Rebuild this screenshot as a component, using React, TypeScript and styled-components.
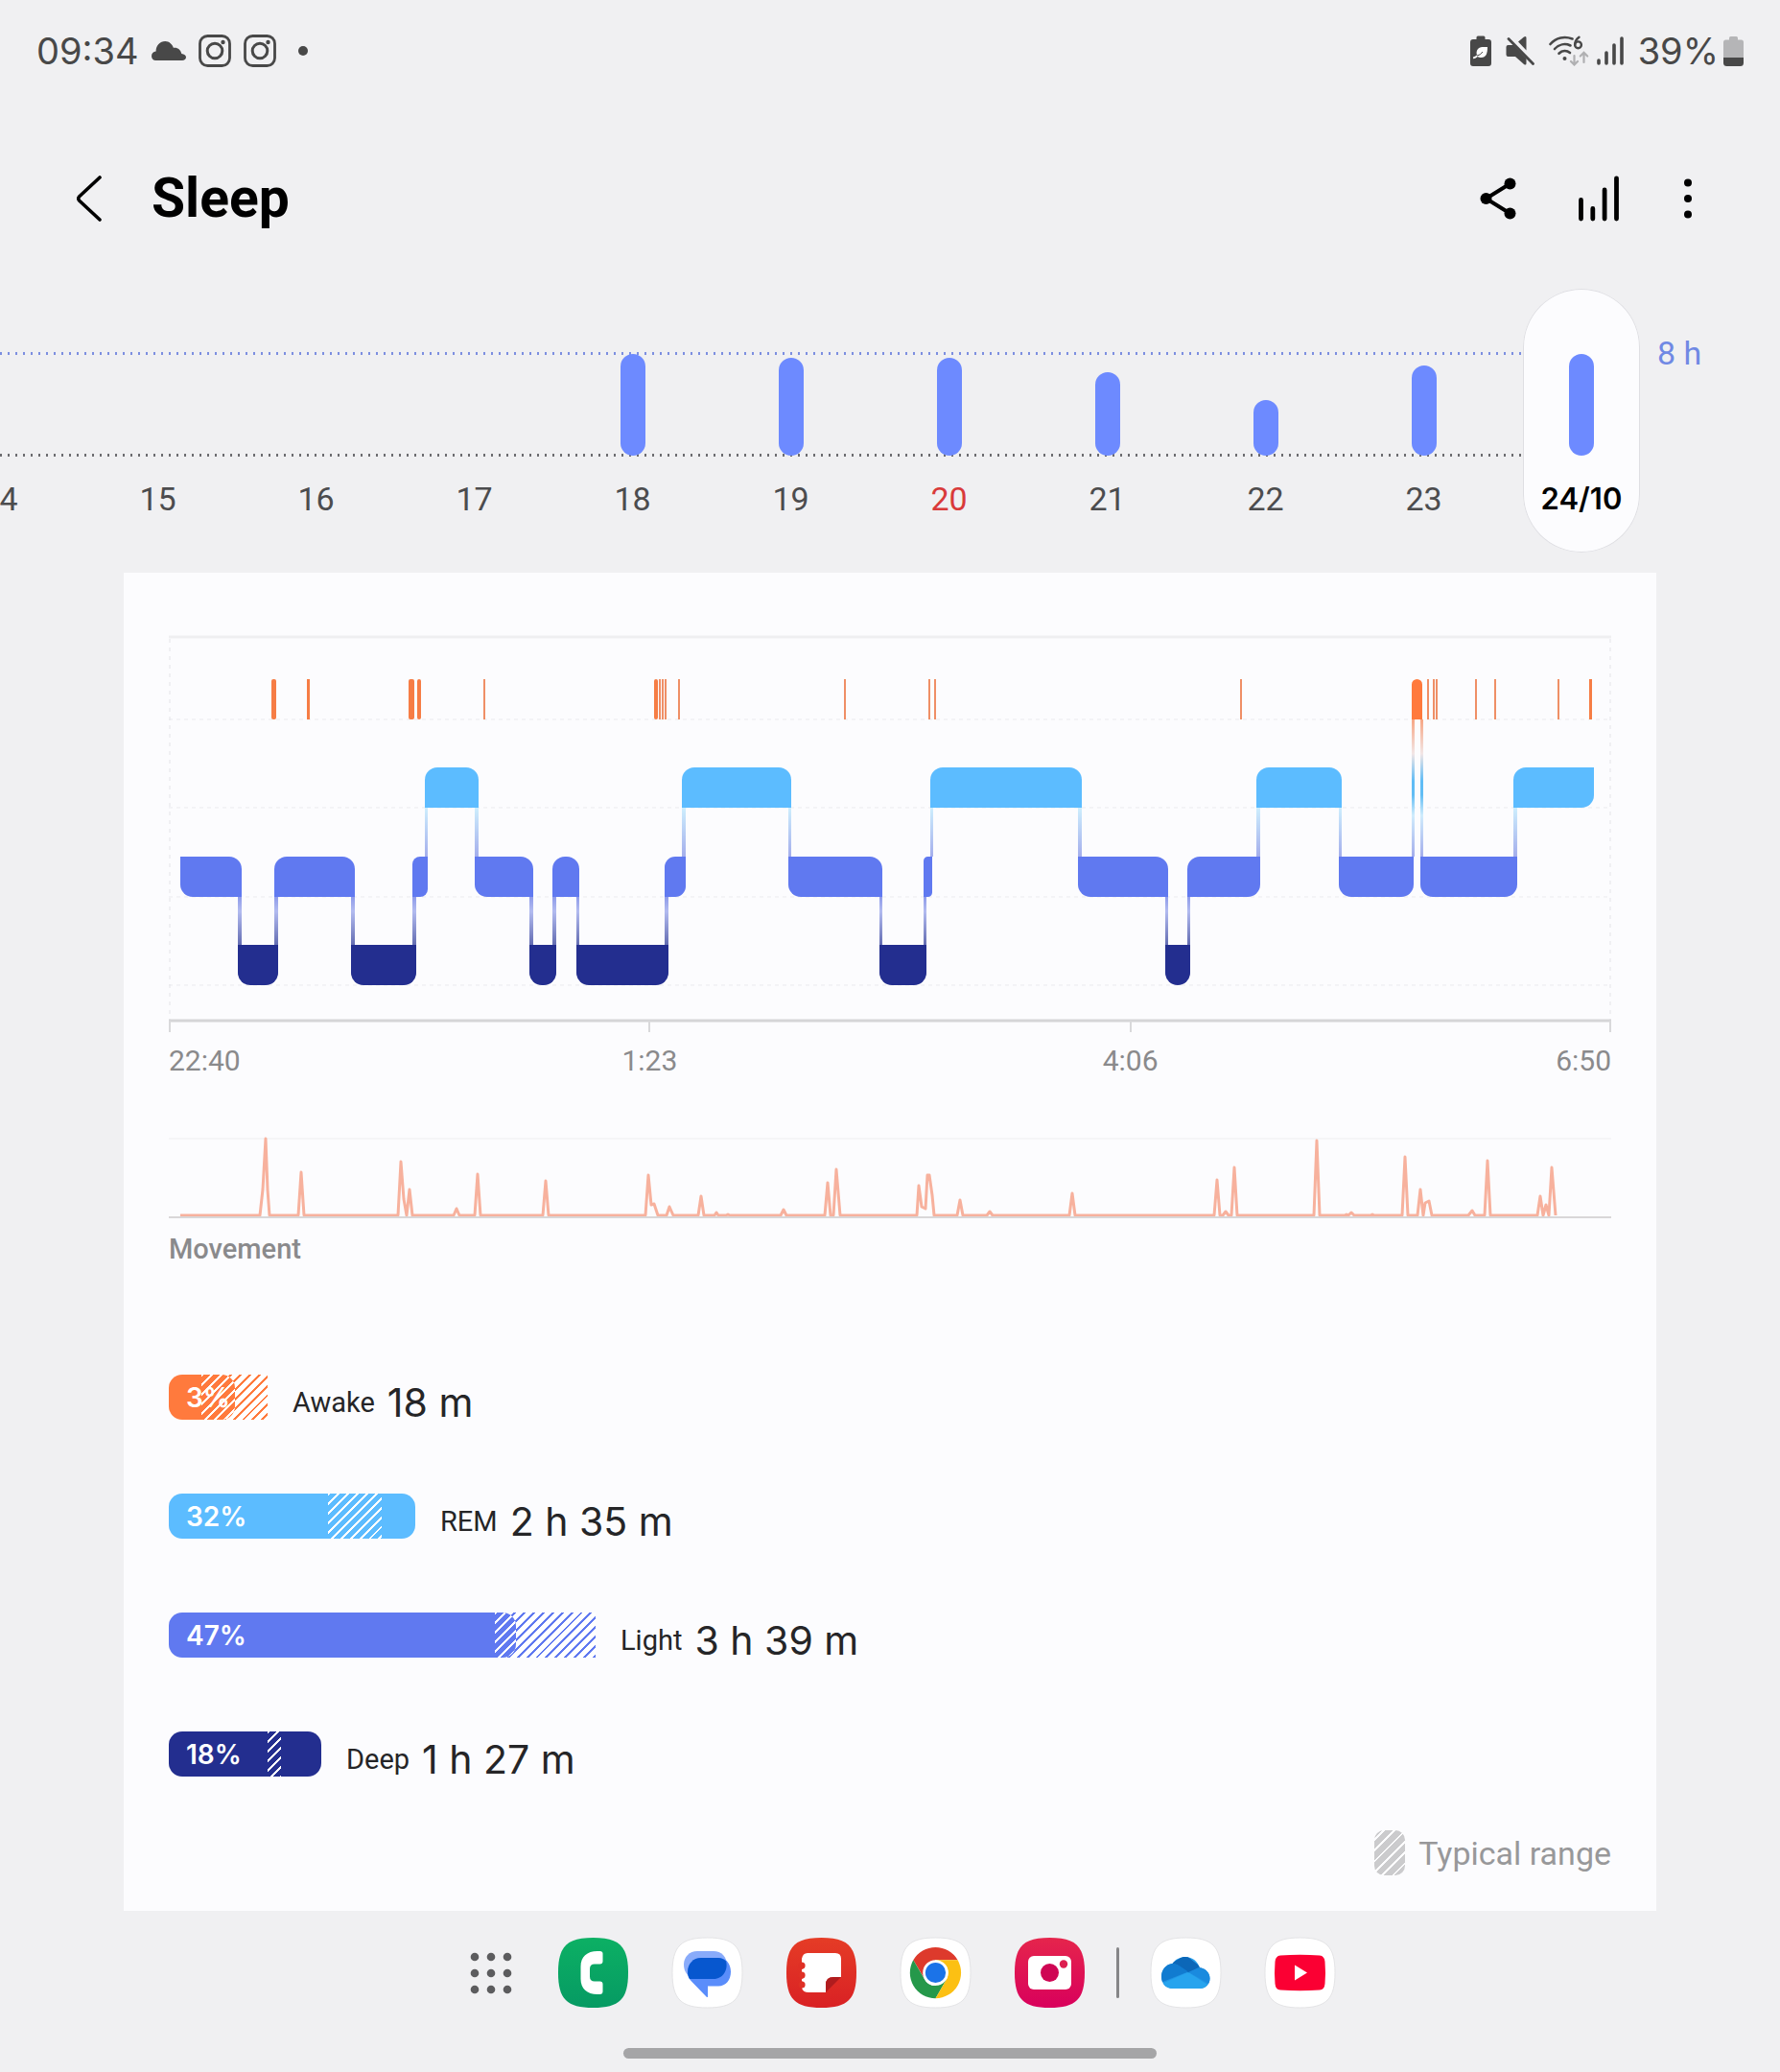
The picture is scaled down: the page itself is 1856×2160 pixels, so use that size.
import React from "react";
import styled, { createGlobalStyle } from "styled-components";

const color = {
  page: "#f0f0f2",
  card: "#fcfcfe",
  ink: "#000000",
  text: "#252527",
  status: "#484848",
  muted: "#8a8a8c",
  day: "#4c4c4e",
  sunday: "#d93a3a",
  bar: "#6d8aff",
  awake: "#ff7a3d",
  rem: "#5cbcff",
  light: "#6079f0",
  deep: "#232e8f",
};

const GlobalStyle = createGlobalStyle`
  body {
    margin: 0;
    background: ${color.page};
    font-family: Roboto, "Liberation Sans", sans-serif;
    color: ${color.text};
  }
  *, *::before, *::after { box-sizing: border-box; }
  button { font: inherit; }
  svg { display: block; }
`;

const Screen = styled.div`
  display: flex;
  flex-direction: column;
  min-height: 100vh;
  overflow: hidden;
`;

/* ---------- status bar ---------- */

const StatusBar = styled.div`
  display: flex;
  align-items: center;
  justify-content: space-between;
  height: 106px;
  padding: 0 38px;
  color: ${color.status};
`;

const StatusGroup = styled.div<{ $gap: number }>`
  display: flex;
  align-items: center;
  gap: ${(p) => p.$gap}px;
`;

const StatusText = styled.span`
  font-family: Inter, Roboto, sans-serif;
  font-size: 38px;
  line-height: 46px;
  font-weight: 400;
`;

const MoreDot = styled.span`
  width: 10px;
  height: 10px;
  margin-left: 10px;
  border-radius: 50%;
  background: currentColor;
`;

const InstagramGlyph = () => (
  <svg width="34" height="34" viewBox="0 0 34 34" fill="none" stroke="currentColor">
    <rect x="1.5" y="1.5" width="31" height="31" rx="8" strokeWidth="2.8" />
    <circle cx="17" cy="17" r="7.8" strokeWidth="3" />
    <circle cx="25.5" cy="8" r="2.2" fill="currentColor" stroke="none" />
  </svg>
);

const CloudGlyph = () => (
  <svg width="36" height="20" viewBox="0 0 36 20" fill="currentColor">
    <path d="M4.5 20C1.800 20 0 18 0 15.500C0 12.500 2 10.600 4.600 10.400C4.600 4.500 8.800 0 14.300 0C18.300 0 21.400 2.800 22.800 6.800C27.500 6.300 30.500 9 31.300 13C34 13.300 36 14.700 36 16.800C36 18.800 34.300 20 32 20Z" />
  </svg>
);

const LeafBatteryGlyph = () => (
  <svg width="22" height="32" viewBox="0 0 22 32">
    <path fill="currentColor" d="M6.500 2Q6.500 0.500 8 0.500H14Q15.500 0.500 15.500 2V4H19Q22 4 22 7V29Q22 32 19 32H3Q0 32 0 29V7Q0 4 3 4H6.500Z" />
    <path fill="#fff" d="M18 12C18 19 16.500 23 11.500 23C9.800 23 8.800 22.600 7.800 22C6.500 23.300 5 24 3.200 24.200L3 22.500C5 22 6.200 21.200 7 20.200C5.500 16 8.500 12.200 12.500 12Z" />
    <path stroke={color.status} strokeWidth="1" fill="none" d="M7 21C10 20.500 12 18.500 12.800 17" />
  </svg>
);

const MuteGlyph = () => (
  <svg width="30" height="32" viewBox="0 0 30 32">
    <path fill="currentColor" d="M13 6.500L19 1.500Q21.500 0 21.500 2.500V15.500ZM2.500 10H8L21.500 24V29Q21.500 31.500 19 30L10 22H2.500Q0.500 22 0.500 20V12Q0.500 10 2.500 10Z" />
    <path stroke="currentColor" strokeWidth="2.800" strokeLinecap="round" d="M3 3.500L28.500 29.500" />
  </svg>
);

const WifiGlyph = () => (
  <svg width="42" height="32" viewBox="0 0 42 32" fill="none" strokeLinecap="round">
    <g stroke="currentColor" strokeWidth="2.600">
      <path d="M1.500 9C7.500 2 16.500 0.500 24.500 3.500" />
      <path d="M6 14C10.500 9 17 8 22.500 10.500" />
      <path d="M10.500 18.800C14 15.500 18.500 15.300 22 18" />
      <path strokeWidth="2.400" d="M31.500 1.800C28.500 4 27.200 6.500 27.200 9.500" />
      <circle cx="30.500" cy="9.800" r="3.400" strokeWidth="2.400" />
    </g>
    <circle cx="16.500" cy="24" r="2" fill="currentColor" />
    <g stroke="#b0b0b2" strokeWidth="2.200">
      <path d="M26.500 21V30M23 27L26.500 30.500L30 27" />
      <path d="M36.500 28V18M32.800 21.500L36.500 17.800L40.200 21.500" />
    </g>
  </svg>
);

const SignalGlyph = () => (
  <svg width="28" height="30" viewBox="0 0 28 30" stroke="currentColor" strokeWidth="3.600" strokeLinecap="round">
    <path d="M2 25V28M10 17V28M18 9V28M26 2V28" />
  </svg>
);

const BatteryGlyph = () => (
  <svg width="21" height="31" viewBox="0 0 21 31">
    <path fill="#b5b5b7" d="M6 1.500Q6 0 7.500 0H13.500Q15 0 15 1.500V3.500H18.500Q21 3.500 21 6V22H0V6Q0 3.500 2.500 3.500H6Z" />
    <path fill="currentColor" d="M0 22H21V27.500Q21 31 17.500 31H3.500Q0 31 0 27.500Z" />
  </svg>
);

/* ---------- title bar ---------- */

const TitleBar = styled.header`
  display: flex;
  align-items: center;
  height: 195px;
  padding: 6px 84px 0 69px;
`;

const IconButton = styled.button<{ $width?: number }>`
  display: grid;
  place-items: center;
  width: ${(p) => p.$width ?? 48}px;
  height: 56px;
  padding: 0;
  border: 0;
  background: none;
  color: ${color.ink};
  cursor: pointer;
`;

const Title = styled.h1`
  flex: 1;
  margin: 0 0 0 41px;
  font-size: 57px;
  line-height: 64px;
  font-weight: 700;
  color: ${color.ink};
`;

const Actions = styled.div`
  display: flex;
  gap: 57px;
`;

/* ---------- day strip ---------- */

const Strip = styled.nav`
  display: flex;
  height: 275px;
  margin-bottom: 21px;
`;

const dots = (c: string) => `linear-gradient(90deg, ${c} 0 2px, transparent 2px 8px)`;

const DayList = styled.div`
  display: flex;
  flex: 1;
  justify-content: flex-end;
  min-width: 0;
  overflow: hidden;
  padding-right: 21px;
  background-image: ${dots("#7d8fe0")}, ${dots("#6c6c70")};
  background-size: 8px 3px, 8px 3px;
  background-position: 0 66px, 0 172px;
  background-repeat: repeat-x;
`;

const Day = styled.button<{ $selected?: boolean; $sunday?: boolean }>`
  display: flex;
  flex: none;
  flex-direction: column;
  align-items: center;
  width: ${(p) => (p.$selected ? 122 : 165)}px;
  height: 275px;
  padding: 0;
  border: 0;
  border-radius: ${(p) => (p.$selected ? 61 : 0)}px;
  box-shadow: ${(p) => (p.$selected ? "inset 0 0 0 1px #dfdfe3" : "none")};
  background: ${(p) => (p.$selected ? color.card : "none")};
  color: ${(p) => (p.$selected ? color.ink : p.$sunday ? color.sunday : color.day)};
  cursor: pointer;
`;

const DayPlot = styled.span`
  display: flex;
  align-items: flex-end;
  height: 174px;
`;

const DayBar = styled.span<{ $height: number }>`
  width: 26px;
  height: ${(p) => p.$height}px;
  border-radius: 13px;
  background: ${color.bar};
`;

const DayLabel = styled.span<{ $selected?: boolean }>`
  margin-top: 25px;
  font-family: ${(p) => (p.$selected ? "Inter, " : "")}Roboto, sans-serif;
  font-size: ${(p) => (p.$selected ? 31 : 34)}px;
  line-height: 40px;
  font-weight: ${(p) => (p.$selected ? 600 : 400)};
`;

const GoalLabel = styled.span`
  flex: none;
  width: 146px;
  padding: 47px 0 0 18px;
  font-size: 34px;
  line-height: 40px;
  color: #7089e4;
`;

type DayData = { label: string; height: number; sunday?: boolean };

const days: DayData[] = [
  { label: "14", height: 0 },
  { label: "15", height: 0 },
  { label: "16", height: 0 },
  { label: "17", height: 0 },
  { label: "18", height: 106 },
  { label: "19", height: 102 },
  { label: "20", height: 102, sunday: true },
  { label: "21", height: 87 },
  { label: "22", height: 58 },
  { label: "23", height: 94 },
];

/* ---------- stage card ---------- */

const Card = styled.main`
  margin: 0 129px;
  padding: 63px 47px 37px;
  background: ${color.card};
`;

const ChartSvg = styled.svg`
  width: 100%;
  height: auto;
`;

const TimeAxis = styled.div`
  display: grid;
  grid-template-columns: 1fr 2fr 2fr 1fr;
  margin: 10px 0 56px;
  text-align: center;
  font-size: 30px;
  line-height: 36px;
  color: ${color.muted};

  > :first-child { text-align: left; }
  > :last-child { text-align: right; }
`;

const MovementLabel = styled.div`
  margin-top: 10px;
  font-size: 29px;
  line-height: 36px;
  font-weight: 500;
  color: ${color.muted};
`;

type Stage = "awake" | "rem" | "light" | "deep";

const stageTop: Record<Stage, number> = { awake: 708, rem: 800, light: 893, deep: 985 };
const stageHeight = 42;
const rank: Record<Stage, number> = { awake: 0, rem: 1, light: 2, deep: 3 };

type Segment = [Stage, number, number];

const segments: Segment[] = [
  ["light", 188, 252],
  ["deep", 248, 290],
  ["light", 286, 370],
  ["deep", 366, 434],
  ["light", 430, 446],
  ["rem", 443, 499],
  ["light", 495, 556],
  ["deep", 552, 580],
  ["light", 576, 604],
  ["deep", 601, 697],
  ["light", 693, 715],
  ["rem", 711, 825],
  ["light", 822, 920],
  ["deep", 917, 966],
  ["light", 963, 972],
  ["rem", 970, 1128],
  ["light", 1124, 1218],
  ["deep", 1215, 1241],
  ["light", 1238, 1314],
  ["rem", 1310, 1399],
  ["light", 1396, 1474],
  ["awake", 1472, 1483],
  ["light", 1481, 1582],
  ["rem", 1578, 1662],
];

/* Short awakenings: left edge and width. */
const wakeMarks: [number, number][] = [
  [283, 5], [320, 3], [426, 6], [435, 4], [504, 2], [682, 4], [687, 2], [690, 2],
  [693, 2], [707, 2], [880, 2], [968, 2], [974, 2], [1293, 2], [1488, 2], [1494, 2],
  [1497, 2], [1538, 2], [1558, 2], [1624, 2], [1657, 3],
];

const isAbove = (a: Stage, b: Stage) => rank[a] < rank[b];

/* A corner stays square where a connector leaves the block. */
function blockPath(i: number) {
  const [stage, x1, x2] = segments[i];
  const prev = segments[i - 1]?.[0];
  const next = segments[i + 1]?.[0];
  const y1 = stageTop[stage];
  const y2 = y1 + stageHeight;
  const r = Math.min(13, (x2 - x1) / 2);
  const arc = (x: number, y: number) => `A${r} ${r} 0 0 1 ${x} ${y}`;
  const tl = prev && !isAbove(prev, stage);
  const bl = !prev || isAbove(prev, stage);
  const tr = next && !isAbove(next, stage);
  const br = !next || isAbove(next, stage);
  return [
    `M${tl ? x1 + r : x1} ${y1}`,
    tr ? `H${x2 - r}${arc(x2, y1 + r)}` : `H${x2}`,
    br ? `V${y2 - r}${arc(x2 - r, y2)}` : `V${y2}`,
    bl ? `H${x1 + r}${arc(x1, y2 - r)}` : `H${x1}`,
    tl ? `V${y1 + r}${arc(x1 + r, y1)}` : `V${y1}`,
    "Z",
  ].join("");
}

function Hypnogram() {
  return (
    <ChartSvg viewBox="176 660 1504 418" role="img" aria-label="Sleep stages from 22:40 to 6:50">
      <defs>
        <linearGradient id="rem-light" x1="0" y1="0" x2="0" y2="1">
          <stop offset="0" stopColor="#cdeefd" />
          <stop offset="1" stopColor="#a4aeec" />
        </linearGradient>
        <linearGradient id="light-deep" x1="0" y1="0" x2="0" y2="1">
          <stop offset="0" stopColor="#8f9cea" />
          <stop offset="0.3" stopColor="#b2bbf0" />
          <stop offset="1" stopColor="#646db2" />
        </linearGradient>
        <linearGradient id="awake-light" x1="0" y1="0" x2="0" y2="1">
          <stop offset="0" stopColor="#f7a684" />
          <stop offset="0.25" stopColor="#f2e6e6" />
          <stop offset="0.45" stopColor="#5fbcf6" />
          <stop offset="0.55" stopColor="#62bdf4" />
          <stop offset="0.7" stopColor="#d0ecfc" />
          <stop offset="1" stopColor="#a4aeec" />
        </linearGradient>
      </defs>
      <path d="M176 664H1680" stroke="#efeff1" strokeWidth="3" />
      <path d="M176 750H1680M176 842H1680M176 935H1680M176 1027H1680" stroke="#ebebee" strokeWidth="1" strokeDasharray="4 4" />
      <path d="M177 666V1064M1679 666V1064" stroke="#e4e4e8" strokeWidth="1" strokeDasharray="4 5" />
      <path d="M176 1064H1680" stroke="#d5d5d7" strokeWidth="3" />
      <path d="M177 1064V1076M677 1064V1076M1179 1064V1076M1679 1064V1076" stroke="#d9d9db" strokeWidth="2" />
      {segments.slice(1).map(([stage, x1], i) => {
        const [before, , end] = segments[i];
        const [upper, lower] = isAbove(before, stage) ? [before, stage] : [stage, before];
        const y = stageTop[upper] + stageHeight;
        return (
          <rect
            key={x1}
            x={x1}
            y={y}
            width={Math.max(end - x1, 3)}
            height={stageTop[lower] - y}
            fill={`url(#${upper}-${lower})`}
          />
        );
      })}
      {segments.map(([stage, x1], i) => (
        <path key={x1} d={blockPath(i)} fill={color[stage]} />
      ))}
      {wakeMarks.map(([x, w]) => (
        <rect key={x} x={x} y="708" width={w} height="42" rx={w > 3 ? 2 : 0} fill={w > 2 ? "#f67d45" : "#ef8f66"} />
      ))}
    </ChartSvg>
  );
}

/* Movement trace as points: time position, level. */
const movement: [number, number][] = [
  [188, 1267], [271, 1267], [274, 1240], [277, 1187], [279, 1240], [281, 1267],
  [311, 1267], [314, 1222], [317, 1267],
  [415, 1267], [418, 1211], [421, 1250], [424, 1267], [427, 1240], [430, 1267],
  [473, 1267], [476, 1260], [479, 1267],
  [495, 1267], [498, 1224], [501, 1267],
  [566, 1267], [569, 1231], [572, 1267],
  [673, 1267], [676, 1225], [679, 1256], [682, 1255], [686, 1267],
  [695, 1267], [698, 1258], [702, 1267],
  [728, 1267], [731, 1247], [734, 1267],
  [745, 1267], [747, 1264], [749, 1267], [757, 1267], [759, 1266], [761, 1267],
  [814, 1267], [817, 1261], [820, 1267],
  [860, 1267], [863, 1233], [866, 1267], [869, 1267], [872, 1219], [876, 1267],
  [956, 1267], [958, 1236], [961, 1258], [965, 1260], [967, 1225], [969, 1225], [972, 1246], [974, 1267],
  [998, 1267], [1001, 1251], [1004, 1267],
  [1029, 1267], [1032, 1263], [1035, 1267],
  [1115, 1267], [1118, 1244], [1121, 1267],
  [1266, 1267], [1269, 1230], [1272, 1267], [1275, 1267], [1278, 1263], [1281, 1267],
  [1284, 1267], [1287, 1217], [1290, 1267],
  [1370, 1267], [1373, 1189], [1376, 1267],
  [1402, 1267], [1404, 1266], [1406, 1267], [1409, 1264], [1412, 1267],
  [1429, 1267], [1431, 1266], [1433, 1267],
  [1462, 1267], [1465, 1206], [1468, 1267],
  [1478, 1267], [1481, 1240], [1484, 1267], [1486, 1254], [1490, 1252], [1493, 1267],
  [1531, 1267], [1535, 1262], [1538, 1267],
  [1548, 1267], [1551, 1210], [1554, 1267],
  [1603, 1267], [1606, 1247], [1609, 1267], [1612, 1256], [1615, 1267],
  [1618, 1217], [1622, 1267],
];

function MovementChart() {
  return (
    <ChartSvg viewBox="176 1180 1504 94" role="img" aria-label="Movement during the night">
      <path d="M176 1187H1680" stroke="#f5f5f7" strokeWidth="2" />
      <polyline
        points={movement.map((p) => p.join(",")).join(" ")}
        fill="none"
        stroke="#f7b19d"
        strokeWidth="3"
        strokeLinejoin="round"
      />
      <path d="M176 1269H1680" stroke="#d9d7d8" strokeWidth="2" />
    </ChartSvg>
  );
}

/* ---------- stage totals ---------- */

const Totals = styled.ul`
  display: flex;
  flex-direction: column;
  gap: 77px;
  margin: 113px 0 56px;
  padding: 0;
  list-style: none;
`;

const TotalRow = styled.li`
  display: flex;
  align-items: center;
  height: 47px;
`;

const Meter = styled.div<{ $width: number }>`
  position: relative;
  flex: none;
  width: ${(p) => p.$width}px;
  height: 47px;
  margin-right: 26px;
`;

const Fill = styled.div<{ $width: number; $color: string }>`
  position: relative;
  display: flex;
  align-items: center;
  width: ${(p) => p.$width}px;
  height: 47px;
  padding-left: 18px;
  overflow: hidden;
  border-radius: 14px;
  background: ${(p) => p.$color};
`;

const Hatch = styled.div<{ $from: number; $to: number; $color: string; $gap: string }>`
  position: absolute;
  top: 0;
  bottom: 0;
  left: ${(p) => p.$from}px;
  width: ${(p) => p.$to - p.$from}px;
  background: repeating-linear-gradient(
    135deg,
    ${(p) => p.$color} 0 2px,
    ${(p) => p.$gap} 2px 7px
  );
`;

const Percent = styled.span`
  font-family: Inter, Roboto, sans-serif;
  font-size: 28px;
  line-height: 36px;
  font-weight: 600;
  color: #fff;
`;

const TotalText = styled.div`
  display: flex;
  align-items: center;
  gap: 13px;
  padding-top: 10px;
`;

const StageName = styled.span`
  font-size: 29px;
  line-height: 48px;
`;

const Duration = styled.span`
  font-family: Inter, Roboto, sans-serif;
  font-size: 41px;
  line-height: 48px;
`;

type Total = {
  name: string;
  percent: string;
  duration: string;
  fill: number;
  from: number;
  to: number;
  color: string;
};

const totals: Total[] = [
  { name: "Awake", percent: "3%", duration: "18 m", fill: 69, from: 34, to: 103, color: color.awake },
  { name: "REM", percent: "32%", duration: "2 h 35 m", fill: 257, from: 166, to: 222, color: color.rem },
  { name: "Light", percent: "47%", duration: "3 h 39 m", fill: 362, from: 340, to: 445, color: color.light },
  { name: "Deep", percent: "18%", duration: "1 h 27 m", fill: 159, from: 103, to: 117, color: color.deep },
];

const RangeKey = styled.div`
  display: flex;
  align-items: center;
  justify-content: flex-end;
  gap: 14px;
  height: 47px;
  font-size: 34px;
  line-height: 40px;
  color: #98989a;
`;

const RangeSwatch = styled.span`
  width: 32px;
  height: 47px;
  border-radius: 10px;
  background: repeating-linear-gradient(135deg, #cbcbcd 0 6px, ${color.card} 6px 8px);
`;

/* ---------- dock ---------- */

const Dock = styled.footer`
  display: flex;
  align-items: center;
  justify-content: center;
  padding-top: 28px;
`;

const DockGroup = styled.div`
  display: flex;
  gap: 46px;
`;

const DockButton = styled.button`
  width: 73px;
  height: 73px;
  padding: 0;
  border: 0;
  background: none;
  cursor: pointer;

  svg { overflow: visible; }
`;

const AllAppsButton = styled(DockButton)`
  display: grid;
  place-items: center;
  width: 95px;
  margin-right: 23px;
`;

const DockDivider = styled.span`
  width: 3px;
  height: 53px;
  margin: 0 33px;
  border-radius: 2px;
  background: #868688;
`;

const HomeIndicator = styled.div`
  width: 30%;
  height: 11px;
  margin: 42px auto 14px;
  border-radius: 6px;
  background: #a5a5a7;
`;

const squircle = "M36.500 0C64 0 73 9 73 36.500S64 73 36.500 73S0 64 0 36.500S9 0 36.500 0Z";

const AppIcon = ({ fill, outlined, children }: { fill: string; outlined?: boolean; children: React.ReactNode }) => (
  <svg width="73" height="73" viewBox="0 0 73 73">
    <path d={squircle} fill={fill} stroke={outlined ? "#e4e4e6" : "none"} strokeWidth="1" />
    {children}
  </svg>
);

const PhoneIcon = () => (
  <AppIcon fill="url(#phone-bg)">
    <defs>
      <linearGradient id="phone-bg" x1="0" y1="0" x2="0" y2="1">
        <stop offset="0" stopColor="#0cb064" />
        <stop offset="1" stopColor="#069a63" />
      </linearGradient>
    </defs>
    <path
      fill="#fff"
      d="M46.500 16.500V24.500Q46.500 27.500 43.500 27.500H38Q33 27.500 33 32.500V40.500Q33 45.500 38 45.500H43.500Q46.500 45.500 46.500 48.500V56Q46.500 59 43.500 59H41C30 59 23.500 53 23.500 43V30C23.500 20 30 14 41 14H43.500Q46.500 14 46.500 16.500Z"
    />
  </AppIcon>
);

const MessagesIcon = () => (
  <AppIcon fill="#fff" outlined>
    <path fill="#89abfa" d="M26 14H43C51 14 57 20 57 28.500S51 42 43 42H20C15 39 12 34.500 12 28C12 20 18 14 26 14Z" />
    <path fill="#5a8dfb" d="M30 21H48C56 21 61 27 61 35.500S56 50.500 48 50.500H37V61.500Q36.500 62.500 35.500 61.500L20 45.500C17.500 43 16 40 16 36C16 27 22 21 30 21Z" />
    <path fill="#0757cf" d="M30 21H48C51 21 54 22.500 56 24.500C58.500 33 53 43 43 43H18C16.500 40.500 16 38 16 36C16 27 22 21 30 21Z" />
  </AppIcon>
);

const NotesIcon = () => (
  <AppIcon fill="url(#notes-bg)">
    <defs>
      <linearGradient id="notes-bg" x1="0" y1="0" x2="0" y2="1">
        <stop offset="0" stopColor="#e53c26" />
        <stop offset="1" stopColor="#d92124" />
      </linearGradient>
    </defs>
    <path fill="#fff" d="M22 16H51Q57 16 57 22V41H49Q41 41 41 49V57H23Q17.500 57 16 52.500A3.600 3.600 0 0 0 16 45.500V43A3.600 3.600 0 0 0 16 36V33A3.600 3.600 0 0 0 16 26V22Q17 16 22 16Z" />
    <path fill="#b01c1e" d="M57 41H49Q41 41 41 49V57Z" />
    <g fill="#df3025">
      <circle cx="16" cy="29" r="3.600" />
      <circle cx="16" cy="39" r="3.600" />
      <circle cx="16" cy="49" r="3.600" />
    </g>
  </AppIcon>
);

const ChromeIcon = () => (
  <AppIcon fill="#fff" outlined>
    <path fill="#dd3a2c" d="M13.300 23.300A26.700 26.700 0 0 1 59.600 23.300H36.500L25 43Z" />
    <path fill="#25984a" d="M13.300 23.300A26.700 26.700 0 0 0 36.500 63.200L48 43.200L36.500 50Q28 50 25 43.200Z" />
    <path fill="#fcc013" d="M59.600 23.300A26.700 26.700 0 0 1 36.500 63.200L48 43.200Q51 36.500 48 30L36.500 23.300Z" />
    <circle cx="36.500" cy="36.500" r="13.300" fill="#fff" />
    <circle cx="36.500" cy="36.500" r="10.600" fill="#1b73e8" />
  </AppIcon>
);

const CameraIcon = () => (
  <AppIcon fill="url(#camera-bg)">
    <defs>
      <linearGradient id="camera-bg" x1="0" y1="0" x2="0" y2="1">
        <stop offset="0" stopColor="#e5254c" />
        <stop offset="1" stopColor="#d9005c" />
      </linearGradient>
    </defs>
    <rect x="14" y="19" width="45" height="35" rx="6" fill="#fff" />
    <circle cx="36.500" cy="36.500" r="9.500" fill="#cf0654" />
    <circle cx="51" cy="27.500" r="4.200" fill="#dd1f50" />
  </AppIcon>
);

const OneDriveIcon = () => (
  <AppIcon fill="#fff" outlined>
    <defs>
      <linearGradient id="drive-front" x1="0" y1="0" x2="0" y2="1">
        <stop offset="0" stopColor="#2aa0ea" />
        <stop offset="1" stopColor="#1c8fe0" />
      </linearGradient>
      <clipPath id="drive-cloud">
        <path d="M23 53C15.500 53 11 47.500 11 40.500C11 33.500 16 27.500 22.500 27C26 22 31 20 36 20C43.500 20 49 25 51 31.500C57 32 61.500 36.500 61.500 42.500C61.500 48.500 57 53 51 53Z" />
      </clipPath>
    </defs>
    <g clipPath="url(#drive-cloud)">
      <rect x="10" y="19" width="53" height="35" fill="url(#drive-front)" />
      <path fill="#0c67b8" d="M21 27L36 18L54 32L49 32L39 37L27 28Z" />
      <path fill="#117bd0" d="M10 47V27H22C28 27 32 31 39 35.500Z" />
      <path fill="#1a8ade" d="M39 36L50 31H63V49Z" />
      <path fill="#27a4ee" d="M11 48L39 36L61 50L55 54H20Z" />
    </g>
  </AppIcon>
);

const YoutubeIcon = () => (
  <AppIcon fill="#fff" outlined>
    <path fill="#fb0033" d="M16 18.500Q36.500 17 57 18.500Q62 19 62.500 25Q63.500 36.500 62.500 48Q62 54 57 54.500Q36.500 56 16 54.500Q11 54 10.500 48Q9.500 36.500 10.500 25Q11 19 16 18.500Z" />
    <path fill="#fff" d="M31 28.500L44 36.500L31 44.500Z" />
  </AppIcon>
);

const grid = [5, 22, 39];

export default function App() {
  return (
    <Screen>
      <GlobalStyle />
      <StatusBar>
        <StatusGroup $gap={13}>
          <StatusText>09:34</StatusText>
          <CloudGlyph />
          <InstagramGlyph />
          <InstagramGlyph />
          <MoreDot />
        </StatusGroup>
        <StatusGroup $gap={15}>
          <LeafBatteryGlyph />
          <MuteGlyph />
          <StatusGroup $gap={8}>
            <WifiGlyph />
            <SignalGlyph />
          </StatusGroup>
          <StatusGroup $gap={5}>
            <StatusText>39%</StatusText>
            <BatteryGlyph />
          </StatusGroup>
        </StatusGroup>
      </StatusBar>

      <TitleBar>
        <IconButton aria-label="Back">
          <svg width="28" height="50" viewBox="0 0 28 50" fill="none" stroke="currentColor" strokeWidth="3.600" strokeLinecap="round" strokeLinejoin="round">
            <path d="M25 3L3.500 23Q2 25 3.500 27L25 47" />
          </svg>
        </IconButton>
        <Title>Sleep</Title>
        <Actions>
          <IconButton aria-label="Share">
            <svg width="38" height="44" viewBox="0 0 38 44">
              <path d="M31.500 6.500L6.500 22L31.500 37.500" fill="none" stroke="currentColor" strokeWidth="4" />
              <g fill="currentColor">
                <circle cx="31.500" cy="6.500" r="6" />
                <circle cx="6.500" cy="22" r="6" />
                <circle cx="31.500" cy="37.500" r="6" />
              </g>
            </svg>
          </IconButton>
          <IconButton aria-label="Trends">
            <svg width="42" height="48" viewBox="0 0 42 48" stroke="currentColor" strokeWidth="4.800" strokeLinecap="round">
              <path d="M2.500 25.500V45M14.800 34.500V45M27.100 15V45M39.500 2.800V45" />
            </svg>
          </IconButton>
          <IconButton aria-label="More options" $width={24}>
            <svg width="10" height="42" viewBox="0 0 10 42" fill="currentColor">
              <circle cx="5" cy="4.500" r="4" />
              <circle cx="5" cy="21" r="4" />
              <circle cx="5" cy="37.500" r="4" />
            </svg>
          </IconButton>
        </Actions>
      </TitleBar>

      <Strip aria-label="Days">
        <DayList>
          {days.map((d) => (
            <Day key={d.label} $sunday={d.sunday}>
              <DayPlot>
                <DayBar $height={d.height} />
              </DayPlot>
              <DayLabel>{d.label}</DayLabel>
            </Day>
          ))}
        </DayList>
        <Day $selected aria-current="date">
          <DayPlot>
            <DayBar $height={106} />
          </DayPlot>
          <DayLabel $selected>24/10</DayLabel>
        </Day>
        <GoalLabel>8 h</GoalLabel>
      </Strip>

      <Card>
        <Hypnogram />
        <TimeAxis>
          <span>22:40</span>
          <span>1:23</span>
          <span>4:06</span>
          <span>6:50</span>
        </TimeAxis>
        <MovementChart />
        <MovementLabel>Movement</MovementLabel>
        <Totals>
          {totals.map((t) => (
            <TotalRow key={t.name}>
              <Meter $width={Math.max(t.fill, t.to)}>
                {t.to > t.fill && <Hatch $from={t.from} $to={t.to} $color={t.color} $gap="#ffffff" />}
                <Fill $width={t.fill} $color={t.color}>
                  <Percent>{t.percent}</Percent>
                  <Hatch $from={t.from} $to={t.to} $color="#ffffff" $gap="transparent" />
                </Fill>
              </Meter>
              <TotalText>
                <StageName>{t.name}</StageName>
                <Duration>{t.duration}</Duration>
              </TotalText>
            </TotalRow>
          ))}
        </Totals>
        <RangeKey>
          <RangeSwatch />
          Typical range
        </RangeKey>
      </Card>

      <Dock>
        <AllAppsButton aria-label="All apps">
          <svg width="44" height="44" viewBox="0 0 44 44" fill="#5c5c5e">
            {grid.map((y) => grid.map((x) => <circle key={`${x}-${y}`} cx={x} cy={y} r="4.300" />))}
          </svg>
        </AllAppsButton>
        <DockGroup>
          <DockButton aria-label="Phone"><PhoneIcon /></DockButton>
          <DockButton aria-label="Messages"><MessagesIcon /></DockButton>
          <DockButton aria-label="Notes"><NotesIcon /></DockButton>
          <DockButton aria-label="Chrome"><ChromeIcon /></DockButton>
          <DockButton aria-label="Camera"><CameraIcon /></DockButton>
        </DockGroup>
        <DockDivider />
        <DockGroup>
          <DockButton aria-label="OneDrive"><OneDriveIcon /></DockButton>
          <DockButton aria-label="YouTube"><YoutubeIcon /></DockButton>
        </DockGroup>
      </Dock>
      <HomeIndicator />
    </Screen>
  );
}
